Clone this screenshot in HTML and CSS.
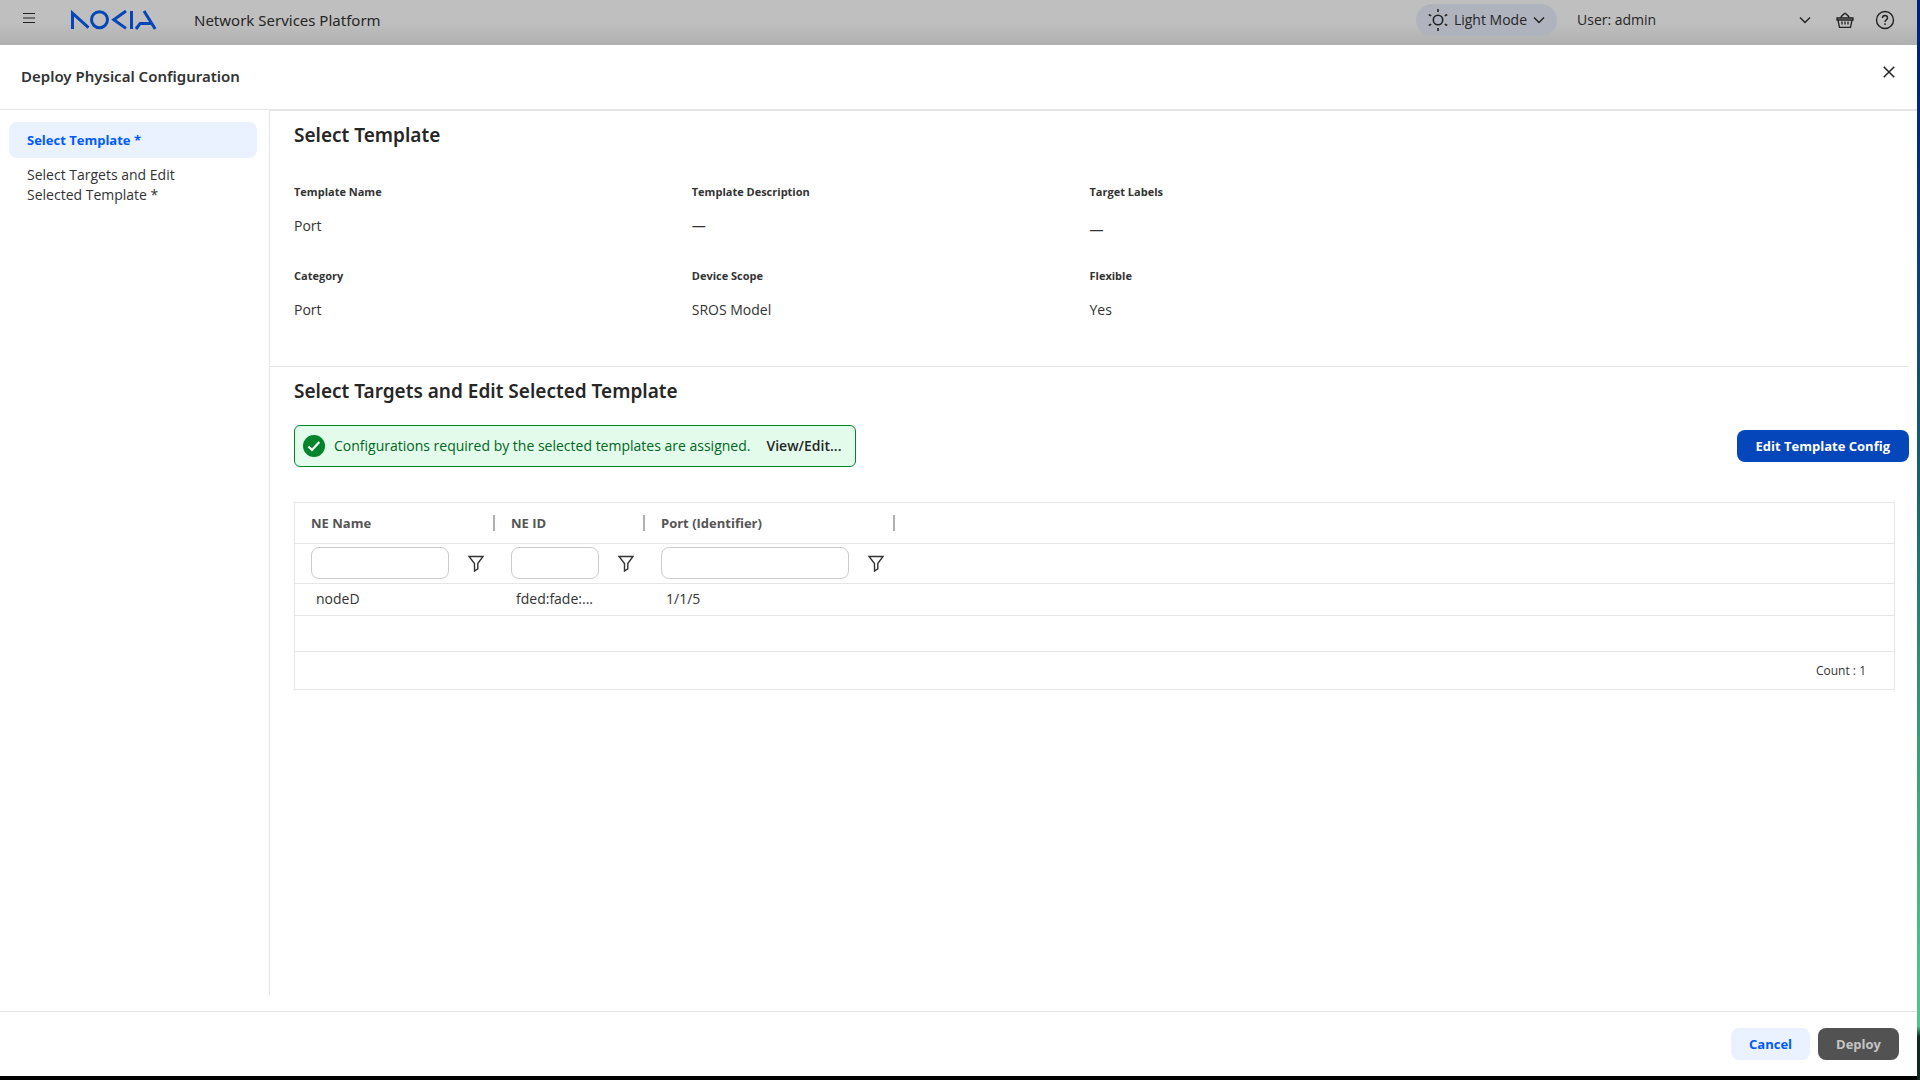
FILE: index.html
```html
<!DOCTYPE html>
<html lang="en">
<head>
<meta charset="utf-8">
<title>Network Services Platform</title>
<link rel="stylesheet" href="styles.css">
</head>
<body>
<div class="app">
  <header class="topbar">
    <button class="icon-button menu" type="button" aria-label="Menu">
      <svg width="12" height="12" viewBox="0 0 12 12"><path d="M0 1.5h12M0 6h12M0 10.5h12" stroke="#222" stroke-width="1.2"/></svg>
    </button>
    <svg class="logo" width="86" height="20" viewBox="0 0 86 20" role="img" aria-label="Nokia">
      <g fill="none" stroke="#0546bb" stroke-width="3">
        <path d="M1.5 19V3.2L17.5 17.6"/>
        <circle cx="28.5" cy="9.7" r="8"/>
        <path d="M55 1L42.8 9.7L55 18.4"/>
        <path d="M60.5 1v18"/>
        <path d="M65 19L69.2 13.4H80M73 1L84.2 19"/>
      </g>
    </svg>
    <span class="product">Network Services Platform</span>
    <div class="tools">
      <button class="mode" type="button">
        <svg width="20" height="22" viewBox="0 0 20 22" fill="none" stroke="#222" stroke-width="1.6"><circle cx="10" cy="11" r="4.700"/><path d="M10 0v3M10 19v3M.8 5.500l2.400 1.400M16.800 15.100l2.400 1.400M.8 16.500l2.400-1.400M16.800 6.900l2.400-1.400"/></svg>
        <span>Light Mode</span>
        <svg class="chevron" width="12" height="8" viewBox="0 0 12 8"><path d="M1 1.500l5 5 5-5"/></svg>
      </button>
      <button class="user" type="button">
        <span>User: admin</span>
        <svg class="chevron" width="12" height="8" viewBox="0 0 12 8"><path d="M1 1.500l5 5 5-5"/></svg>
      </button>
      <button class="icon-button" type="button" aria-label="Basket">
        <svg width="18" height="18" viewBox="0 0 18 18" fill="none" stroke="#222" stroke-width="1.300"><path d="M1 7h16v2H1zM2 9l1.500 7.400h11L16 9M5 7c0-2.500 2-3.200 4-4.800C11 3.800 13 4.500 13 7M6 10.500v3M9 10.500v3M12 10.500v3"/></svg>
      </button>
      <button class="icon-button" type="button" aria-label="Help">
        <svg width="20" height="20" viewBox="0 0 20 20" fill="none" stroke="#222" stroke-width="1.400"><circle cx="10" cy="10" r="8.500"/><path d="M7.500 8c0-3.300 5-3.300 5 0 0 1.800-2.500 1.900-2.500 3.900M10 13.300v1.700"/></svg>
      </button>
    </div>
  </header>

  <main class="dialog">
    <div class="dialog-head">
      <h1>Deploy Physical Configuration</h1>
      <button class="icon-button" type="button" aria-label="Close">
        <svg width="12" height="12" viewBox="0 0 12 12"><path d="M.7.7l10.600 10.600M11.300.7L.7 11.300" stroke="#222" stroke-width="1.500"/></svg>
      </button>
    </div>

    <div class="dialog-body">
      <nav class="steps">
        <a class="step active" href="#template">Select Template *</a>
        <a class="step" href="#targets">Select Targets and Edit Selected Template *</a>
      </nav>

      <div class="content">
        <section class="summary" id="template">
          <h2>Select Template</h2>
          <dl class="fields">
            <div><dt>Template Name</dt><dd>Port</dd></div>
            <div><dt>Template Description</dt><dd>—</dd></div>
            <div><dt>Target Labels</dt><dd class="labels">—</dd></div>
            <div class="row-start"><dt>Category</dt><dd>Port</dd></div>
            <div><dt>Device Scope</dt><dd>SROS Model</dd></div>
            <div><dt>Flexible</dt><dd>Yes</dd></div>
          </dl>
        </section>

        <section class="targets" id="targets">
          <h2>Select Targets and Edit Selected Template</h2>
          <div class="actions">
            <div class="alert" role="status">
              <svg width="22" height="22" viewBox="0 0 22 22"><circle cx="11" cy="11" r="11" fill="#00852c"/><path d="M5.500 11.500l3.500 3.500 7.300-8" fill="none" stroke="#fff" stroke-width="2.200"/></svg>
              <span>Configurations required by the selected templates are assigned.</span>
              <a href="#configurations">View/Edit...</a>
            </div>
            <button class="button primary" type="button">Edit Template Config</button>
          </div>

          <div class="grid">
            <table>
              <colgroup><col class="col-name"><col class="col-id"><col class="col-port"><col></colgroup>
              <thead>
                <tr class="titles"><th scope="col"><span>NE Name</span></th><th scope="col"><span>NE ID</span></th><th scope="col"><span>Port (Identifier)</span></th><td></td></tr>
                <tr class="filters">
                  <td><div><input type="text" aria-label="Filter NE Name"><button class="icon-button" type="button" aria-label="NE Name filter options"><svg class="funnel" width="16" height="17" viewBox="0 0 16 17"><path d="M1 1.500h14L9.800 8.500v5.300L6.500 16V8.500z"/></svg></button></div></td>
                  <td><div><input type="text" aria-label="Filter NE ID"><button class="icon-button" type="button" aria-label="NE ID filter options"><svg class="funnel" width="16" height="17" viewBox="0 0 16 17"><path d="M1 1.500h14L9.800 8.500v5.300L6.500 16V8.500z"/></svg></button></div></td>
                  <td><div><input type="text" aria-label="Filter Port"><button class="icon-button" type="button" aria-label="Port filter options"><svg class="funnel" width="16" height="17" viewBox="0 0 16 17"><path d="M1 1.500h14L9.800 8.500v5.300L6.500 16V8.500z"/></svg></button></div></td>
                  <td></td>
                </tr>
              </thead>
              <tbody>
                <tr class="record"><td>nodeD</td><td>fded:fade:...</td><td>1/1/5</td><td></td></tr>
              </tbody>
            </table>
            <div class="grid-space"></div>
            <div class="count">Count : 1</div>
          </div>
        </section>
      </div>
    </div>

    <footer class="dialog-foot">
      <button class="button secondary" type="button">Cancel</button>
      <button class="button" type="button" disabled>Deploy</button>
    </footer>
  </main>
</div>
</body>
</html>
```
FILE: styles.css
```css
* {
  box-sizing: border-box;
}

body {
  margin: 0;
  font: 14px/20px "Open Sans", "Noto Sans", sans-serif;
  color: #333;
  background: linear-gradient(#001f80 0, #002a80 12%, #15646f 45%, #2f9070 62%, #4cc48b 90%, #4cc48b 95%, #0c2a22 96%);
}

button,
input {
  font: inherit;
  color: inherit;
}

button {
  padding: 0;
  border: 0;
  background: none;
}

a {
  color: inherit;
  text-decoration: none;
}

svg {
  display: block;
  flex: none;
}

.app {
  display: flex;
  flex-direction: column;
  min-height: 100vh;
  margin-right: 3px;
  border-bottom: 4px solid #000;
}

.topbar {
  display: flex;
  align-items: center;
  height: 45px;
  padding: 0 22px 5px 23px;
  color: #262626;
  background: linear-gradient(#bfbfbf 50%, #b0b0b0);
}

.menu {
  padding-bottom: 4px;
}

.logo {
  margin: 0 37px 0 36px;
}

.product {
  font: 15px/20px "Noto Sans", sans-serif;
}

.tools {
  display: flex;
  align-items: center;
  margin-left: auto;
}

.mode {
  display: flex;
  align-items: center;
  gap: 6px;
  height: 32px;
  padding: 0 12px;
  border-radius: 16px;
  background: #afb3be;
}

.user {
  display: flex;
  align-items: center;
  justify-content: space-between;
  width: 234px;
  margin: 0 25px 0 20px;
}

.tools .icon-button + .icon-button {
  margin-left: 21px;
}

.chevron {
  fill: none;
  stroke: #222;
  stroke-width: 1.4;
}

.dialog {
  display: flex;
  flex: 1;
  flex-direction: column;
  background: #fff;
}

.dialog-head {
  display: flex;
  align-items: center;
  justify-content: space-between;
  height: 65px;
  padding: 0 22px 4px 21px;
  border-bottom: 1px solid #e5e5e5;
}

h1,
h2 {
  margin: 0;
  font-family: "Noto Sans", sans-serif;
  font-weight: 600;
}

h1 {
  padding-top: 2px;
  font-size: 15px;
}

h2 {
  font-size: 19px;
  line-height: 24px;
  color: #262626;
}

.dialog-head .icon-button {
  padding-bottom: 6px;
}

.dialog-body {
  display: flex;
  flex: 1;
  margin-bottom: 16px;
}

.steps {
  flex: none;
  width: 269px;
  padding: 12px 12px 0 9px;
}

.step {
  display: block;
  padding: 7px 60px 8px 18px;
  border-radius: 8px;
}

.step.active {
  padding-top: 8px;
  font-size: 13px;
  font-weight: 700;
  color: #005aff;
  background: #ebf2ff;
}

.content {
  flex: 1;
  border-top: 1px solid #e5e5e5;
  border-left: 1px solid #e5e5e5;
}

.summary {
  margin-right: 8px;
  padding: 12px 24px 46px;
  border-bottom: 1px solid #e5e5e5;
}

.fields {
  display: grid;
  grid-template-columns: repeat(4, 1fr);
  row-gap: 30px;
  margin: 35px 0 0;
}

.row-start {
  grid-column-start: 1;
}

dt {
  font: 700 11px/20px "Open Sans", sans-serif;
}

dd {
  margin: 14px 0 0;
}

dd.labels {
  padding-top: 4px;
  margin-bottom: -4px;
}

.targets {
  padding: 12px 8px 0 24px;
}

.actions {
  display: flex;
  align-items: center;
  justify-content: space-between;
  margin: 22px 0 35px;
}

.alert {
  display: flex;
  align-items: center;
  gap: 9px;
  height: 42px;
  padding: 0 14px 0 8px;
  border: 1px solid #00852c;
  border-radius: 6px;
  color: #006622;
  background: #e2fbea;
}

.alert a {
  margin-left: 7px;
  font-weight: 600;
  color: #262626;
}

.button {
  height: 32px;
  padding: 0 18px;
  border-radius: 8px;
  font-size: 13px;
  font-weight: 700;
}

.button:disabled {
  color: #c4c4c4;
  background: #525252;
}

.primary {
  padding: 0 19px;
  color: #fff;
  background: #0546bb;
}

.secondary {
  color: #005aff;
  background: #ebf2ff;
}

.grid {
  margin-right: 14px;
  border: 1px solid #e5e6ea;
}

table {
  width: 100%;
  border-collapse: collapse;
  table-layout: fixed;
}

.col-name {
  width: 200px;
}

.col-id {
  width: 150px;
}

.col-port {
  width: 250px;
}

th,
td {
  padding: 0;
  border-bottom: 1px solid #e5e6ea;
  text-align: left;
}

.titles {
  height: 40px;
  font-size: 13px;
  color: #555;
}

th span {
  display: block;
  height: 16px;
  padding-left: 16px;
  border-right: 2px solid #b0b0b0;
  line-height: 16px;
}

.filters {
  height: 40px;
}

.filters div {
  display: flex;
  align-items: center;
  gap: 19px;
  padding: 0 11px 0 16px;
}

.filters input {
  flex: 1;
  width: 0;
  height: 32px;
  padding: 0 8px;
  border: 1px solid #ccc;
  border-radius: 8px;
  background: #fff;
}

.funnel {
  fill: none;
  stroke: #333;
  stroke-width: 1.4;
}

.record {
  height: 32px;
}

.record td {
  padding-left: 21px;
}

.grid-space {
  height: 36px;
  border-bottom: 1px solid #e5e6ea;
}

.count {
  padding: 9px 28px 8px;
  font-size: 12px;
  text-align: right;
}

.dialog-foot {
  display: flex;
  justify-content: flex-end;
  gap: 8px;
  padding: 16px 18px;
  border-top: 1px solid #e5e5e5;
}
```
